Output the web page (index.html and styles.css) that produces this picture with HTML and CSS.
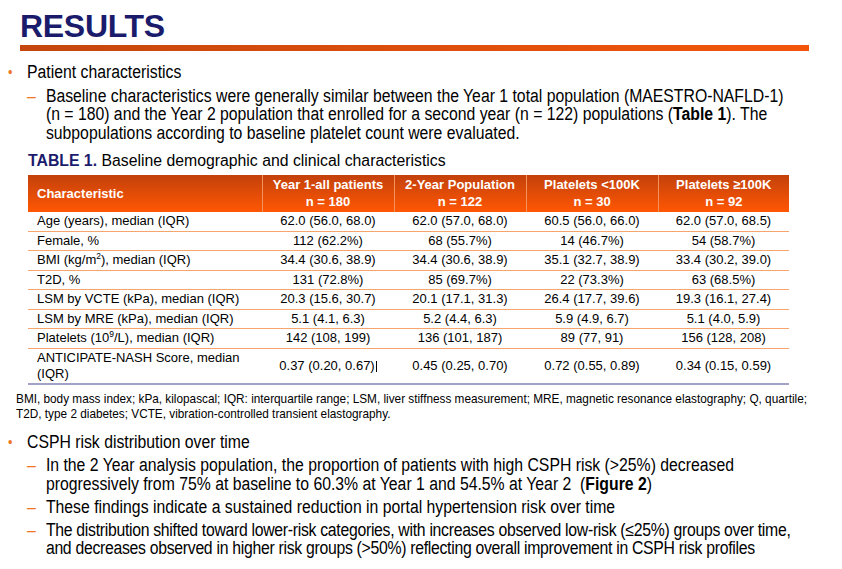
FILE: index.html
```html
<!DOCTYPE html>
<html lang="en">
  <head>
    <meta charset="UTF-8" />
    <title>Results</title>
    <link rel="stylesheet" href="styles.css">
  </head>
  <body>
    <div class="slide">
      <h1 class="title">RESULTS</h1>
      <div class="rule"></div>

      <div class="narrow section-one">
        <ul class="points">
          <li class="point">
            Patient characteristics
            <ul class="subpoints">
              <li>Baseline characteristics were generally similar between the Year 1 total population (MAESTRO-NAFLD-1) (n = 180) and the Year 2 population that enrolled for a second year (n = 122) populations (<b>Table 1</b>). The subpopulations according to baseline platelet count were evaluated.</li>
            </ul>
          </li>
        </ul>
      </div>

      <div class="table-block">
        <div class="caption"><span class="caption-label">TABLE 1.</span> Baseline demographic and clinical characteristics</div>
        <table class="data">
          <thead>
            <tr>
              <th class="first">Characteristic</th>
              <th>Year 1-all patients<br>n = 180</th>
              <th>2-Year Population<br>n = 122</th>
              <th>Platelets &lt;100K<br>n = 30</th>
              <th>Platelets ≥100K<br>n = 92</th>
            </tr>
          </thead>
          <tbody>
            <tr><td>Age (years), median (IQR)</td><td>62.0 (56.0, 68.0)</td><td>62.0 (57.0, 68.0)</td><td>60.5 (56.0, 66.0)</td><td>62.0 (57.0, 68.5)</td></tr>
            <tr><td>Female, %</td><td>112 (62.2%)</td><td>68 (55.7%)</td><td>14 (46.7%)</td><td>54 (58.7%)</td></tr>
            <tr><td>BMI (kg/m<sup>2</sup>), median (IQR)</td><td>34.4 (30.6, 38.9)</td><td>34.4 (30.6, 38.9)</td><td>35.1 (32.7, 38.9)</td><td>33.4 (30.2, 39.0)</td></tr>
            <tr><td>T2D, %</td><td>131 (72.8%)</td><td>85 (69.7%)</td><td>22 (73.3%)</td><td>63 (68.5%)</td></tr>
            <tr><td>LSM by VCTE (kPa), median (IQR)</td><td>20.3 (15.6, 30.7)</td><td>20.1 (17.1, 31.3)</td><td>26.4 (17.7, 39.6)</td><td>19.3 (16.1, 27.4)</td></tr>
            <tr><td>LSM by MRE (kPa), median (IQR)</td><td>5.1 (4.1, 6.3)</td><td>5.2 (4.4, 6.3)</td><td>5.9 (4.9, 6.7)</td><td>5.1 (4.0, 5.9)</td></tr>
            <tr><td>Platelets (10<sup>9</sup>/L), median (IQR)</td><td>142 (108, 199)</td><td>136 (101, 187)</td><td>89 (77, 91)</td><td>156 (128, 208)</td></tr>
            <tr class="tall"><td>ANTICIPATE-NASH Score, median (IQR)</td><td>0.37 (0.20, 0.67)<span class="cursor"></span></td><td>0.45 (0.25, 0.70)</td><td>0.72 (0.55, 0.89)</td><td>0.34 (0.15, 0.59)</td></tr>
          </tbody>
        </table>
      </div>

      <div class="narrow footnote-wrap">
        <p class="footnote">BMI, body mass index; kPa, kilopascal; IQR: interquartile range; LSM, liver stiffness measurement; MRE, magnetic resonance elastography; Q, quartile; T2D, type 2 diabetes; VCTE, vibration-controlled transient elastography.</p>
      </div>

      <div class="narrow section-two">
        <ul class="points">
          <li class="point">
            CSPH risk distribution over time
            <ul class="subpoints">
              <li>In the 2 Year analysis population, the proportion of patients with high CSPH risk (&gt;25%) decreased progressively from 75% at baseline to 60.3% at Year 1 and 54.5% at Year 2&nbsp; (<b>Figure 2</b>)</li>
              <li>These findings indicate a sustained reduction in portal hypertension risk over time</li>
              <li class="tight">The distribution shifted toward lower-risk categories, with increases observed low-risk (≤25%) groups over time, and decreases observed in higher risk groups (&gt;50%) reflecting overall improvement in CSPH risk profiles</li>
            </ul>
          </li>
        </ul>
      </div>
    </div>
  </body>
</html>
```

FILE: styles.css
```css
* {
  margin: 0;
  padding: 0;
  box-sizing: border-box;
}

body {
  background-color: #ffffff;
  color: #000000;
  font-family: "Liberation Sans", Arial, sans-serif;
}

.slide {
  width: 842px;
  height: 569px;
  padding-top: 7px;
  overflow: hidden;
}

.title {
  margin-left: 20px;
  font-size: 32px;
  line-height: 38px;
  font-weight: bold;
  color: #1b1b6b;
  letter-spacing: -0.3px;
}

.rule {
  width: 789px;
  height: 6px;
  margin-left: 20px;
  background: linear-gradient(to right, #c5460e, #f3560b);
}

/* slide body text is set narrow: Arial squeezed to 90% */
.narrow {
  width: 935.5px;
  transform: scaleX(0.9);
  transform-origin: 0 0;
}

.section-one {
  margin-top: 12px;
}

.section-two {
  margin-top: 12px;
}

.points {
  list-style: none;
  padding-right: 50px;
}

.point {
  position: relative;
  padding-left: 30px;
  font-size: 17.55px;
  line-height: 18.5px;
}

.point::before {
  content: "•";
  position: absolute;
  left: 9px;
  top: 0;
  color: #f07525;
  font-size: 14px;
}

.subpoints {
  list-style: none;
  margin-top: 5px;
}

.subpoints li {
  position: relative;
  padding-left: 21px;
  margin-bottom: 4.5px;
}

.subpoints li.tight {
  letter-spacing: -0.32px;
}

.subpoints li::before {
  content: "–";
  position: absolute;
  left: 0;
  top: 0;
  color: #f07525;
}

.table-block {
  margin: 9px 0 0 28px;
  width: 761px;
}

.caption {
  font-size: 15.8px;
  line-height: 20px;
  margin-bottom: 4px;
}

.caption-label {
  font-weight: bold;
  color: #1b1b6b;
}

.data {
  width: 761px;
  border-collapse: collapse;
  font-size: 13px;
  border-bottom: 2px solid #a2a2c8;
}

.data th {
  background: linear-gradient(to bottom, #c3410b, #ff5703);
  color: #ffffff;
  font-weight: bold;
  font-size: 13px;
  line-height: 17px;
  padding: 1px 4px;
  height: 36.5px;
  border-left: 1px solid #f3925c;
  text-align: center;
}

.data th.first {
  text-align: left;
  padding-left: 9px;
  border-left: none;
}

.data th:nth-child(1) { width: 234px; }
.data th:nth-child(2) { width: 132px; }
.data th:nth-child(3) { width: 132px; }
.data th:nth-child(4) { width: 132px; }
.data th:nth-child(5) { width: 131px; }

.data td {
  text-align: center;
  line-height: 16px;
  padding: 1px 4px 1px;
  height: 19.5px;
  border-top: 1.5px solid #f7a56c;
}

.data tbody tr:first-child td {
  border-top: none;
}

.data td:first-child {
  text-align: left;
  padding-left: 9px;
}

.data tr.tall td {
  height: 35px;
}

.data sup {
  font-size: 8.5px;
  line-height: 0;
}

.cursor {
  display: inline-block;
  width: 1px;
  height: 11px;
  margin-left: 1px;
  background: #000000;
  vertical-align: -2px;
}

.footnote-wrap {
  margin-top: 6px;
}

.footnote {
  padding: 0 30px 0 17.8px;
  font-size: 13.1px;
  line-height: 15px;
}
```
